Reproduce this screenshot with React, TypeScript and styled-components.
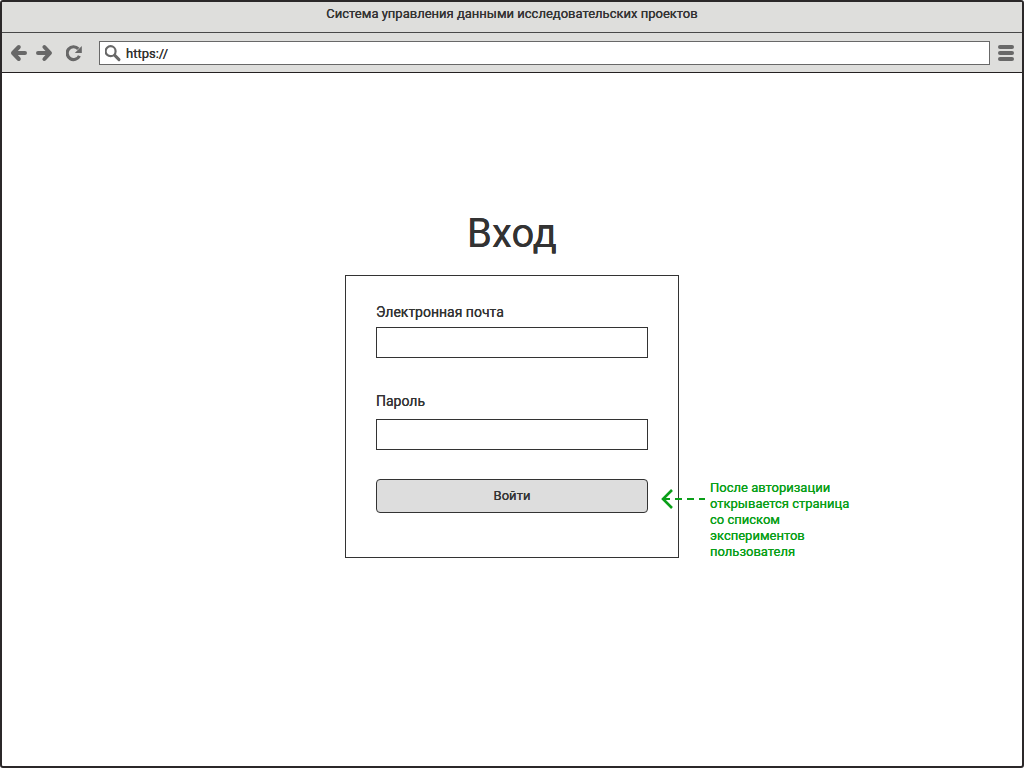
import React from "react";
import styled, { createGlobalStyle } from "styled-components";

const ink = "#333333";
const green = "#0a9f18";
const iconGrey = "#686868";

const GlobalStyle = createGlobalStyle`
  * { box-sizing: border-box; }
  body {
    margin: 0;
    background: #ffffff;
    color: ${ink};
    font-family: Roboto, "Liberation Sans", sans-serif;
    font-size: 13px;
    text-shadow: 0 0 currentColor;
  }
  input, button { font: inherit; color: inherit; text-shadow: inherit; }
`;

const Window = styled.div`
  display: flex;
  flex-direction: column;
  min-height: 100vh;
  border: 2px solid #2b2829;
  border-radius: 3px;
  overflow: hidden;
`;

const TitleBar = styled.header`
  height: 31px;
  padding-top: 4px;
  line-height: 16px;
  text-align: center;
  background: #dededc;
  border-bottom: 1px solid #484848;
`;

const Toolbar = styled.nav`
  display: flex;
  align-items: center;
  height: 40px;
  padding: 0 8px;
  background: #dededc;
  border-bottom: 1px solid #242021;
`;

const IconButton = styled.button<{ $gap: number }>`
  display: flex;
  margin: 0 ${(p) => p.$gap}px 0 0;
  padding: 0;
  border: 0;
  background: none;
  color: ${iconGrey};
`;

const AddressBar = styled.label`
  display: flex;
  flex: 1;
  align-items: center;
  gap: 4px;
  height: 24px;
  margin-right: 8px;
  padding-left: 5px;
  background: #ffffff;
  border: 1px solid #686868;
  color: ${iconGrey};
`;

const AddressInput = styled.input`
  flex: 1;
  min-width: 0;
  height: 100%;
  padding: 2px 0 0;
  border: 0;
  outline: 0;
  background: none;
  && { color: ${ink}; }
`;

const Main = styled.main`
  display: flex;
  flex: 1;
  flex-direction: column;
  align-items: center;
  padding: 137px 16px 32px;
`;

const Heading = styled.h1`
  margin: 0 0 17px;
  font-size: 40px;
  font-weight: 400;
  line-height: 48px;
`;

const Card = styled.div`
  position: relative;
  width: 334px;
  max-width: 100%;
  padding: 28px 30px 44px;
  border: 1px solid ${ink};
`;

const Form = styled.form`
  display: flex;
  flex-direction: column;
`;

const Field = styled.label<{ $gap: number; $after: number }>`
  display: flex;
  flex-direction: column;
  gap: ${(p) => p.$gap}px;
  margin-bottom: ${(p) => p.$after}px;
  font-size: 14px;
  line-height: 16px;
`;

const TextInput = styled.input`
  width: 100%;
  height: 31px;
  padding: 0 8px;
  border: 1px solid ${ink};
  border-radius: 0;
  background: #ffffff;
`;

const SubmitButton = styled.button`
  height: 34px;
  padding: 0 8px 2px;
  border: 1px solid ${ink};
  border-radius: 4px;
  background: #dddddd;
`;

const Note = styled.aside`
  position: absolute;
  top: 204px;
  left: calc(100% - 17px);
  display: flex;
  gap: 4px;
  width: 192px;
  color: ${green};
`;

const NoteArrow = styled.svg`
  flex: none;
  margin-top: 8px;
`;

const NoteText = styled.p`
  margin: 0;
  line-height: 16px;
`;

const ArrowIcon = ({ flip }: { flip?: boolean }) => (
  <svg width="18" height="18" viewBox="0 0 18 18" fill="none" stroke="currentColor" strokeWidth="4" strokeLinecap="round" strokeLinejoin="round" aria-hidden="true">
    <path d={flip ? "M2 9H13.6M8.4 3L14 9L8.4 15" : "M15 9H4M8.8 3L3 9L8.8 15"} />
  </svg>
);

const ReloadIcon = () => (
  <svg width="18" height="18" viewBox="0 0 18 18" aria-hidden="true">
    <path d="M12.3 4.8A6.4 6.4 0 1 0 13.4 11.8" fill="none" stroke="currentColor" strokeWidth="3.2" />
    <path d="M15.8 2V9H8.8Z" fill="currentColor" />
  </svg>
);

const SearchIcon = () => (
  <svg width="17" height="18" viewBox="0 0 17 18" fill="none" stroke="currentColor" aria-hidden="true">
    <circle cx="5.6" cy="7.2" r="5" strokeWidth="2.2" />
    <path d="M9.8 11.4L14 15.6" strokeWidth="3" strokeLinecap="round" />
  </svg>
);

const MenuIcon = () => (
  <svg width="16" height="18" viewBox="0 0 16 18" fill="currentColor" aria-hidden="true">
    <rect y="1" width="16" height="4" rx="2" />
    <rect y="7" width="16" height="4" rx="2" />
    <rect y="13" width="16" height="4" rx="2" />
  </svg>
);

export default function App() {
  return (
    <Window>
      <GlobalStyle />
      <TitleBar>Система управления данными исследовательских проектов</TitleBar>
      <Toolbar>
        <IconButton $gap={8} aria-label="Назад"><ArrowIcon /></IconButton>
        <IconButton $gap={12} aria-label="Вперёд"><ArrowIcon flip /></IconButton>
        <IconButton $gap={15} aria-label="Обновить"><ReloadIcon /></IconButton>
        <AddressBar>
          <SearchIcon />
          <AddressInput type="text" defaultValue="https://" aria-label="Адрес" />
        </AddressBar>
        <IconButton $gap={0} aria-label="Меню"><MenuIcon /></IconButton>
      </Toolbar>
      <Main>
        <Heading>Вход</Heading>
        <Card>
          <Form onSubmit={(e) => e.preventDefault()}>
            <Field $gap={7} $after={35}>
              Электронная почта
              <TextInput type="email" name="email" />
            </Field>
            <Field $gap={10} $after={29}>
              Пароль
              <TextInput type="password" name="password" />
            </Field>
            <SubmitButton type="submit">Войти</SubmitButton>
          </Form>
          <Note>
            <NoteArrow width="45" height="22" viewBox="0 0 45 22" fill="none" stroke="currentColor" strokeWidth="2" aria-hidden="true">
              <path d="M11 2L2 11L11 20" strokeWidth="2.6" />
              <path d="M2 11H44" strokeDasharray="7 5" />
            </NoteArrow>
            <NoteText>
              После авторизации открывается страница со списком экспериментов пользователя
            </NoteText>
          </Note>
        </Card>
      </Main>
    </Window>
  );
}
